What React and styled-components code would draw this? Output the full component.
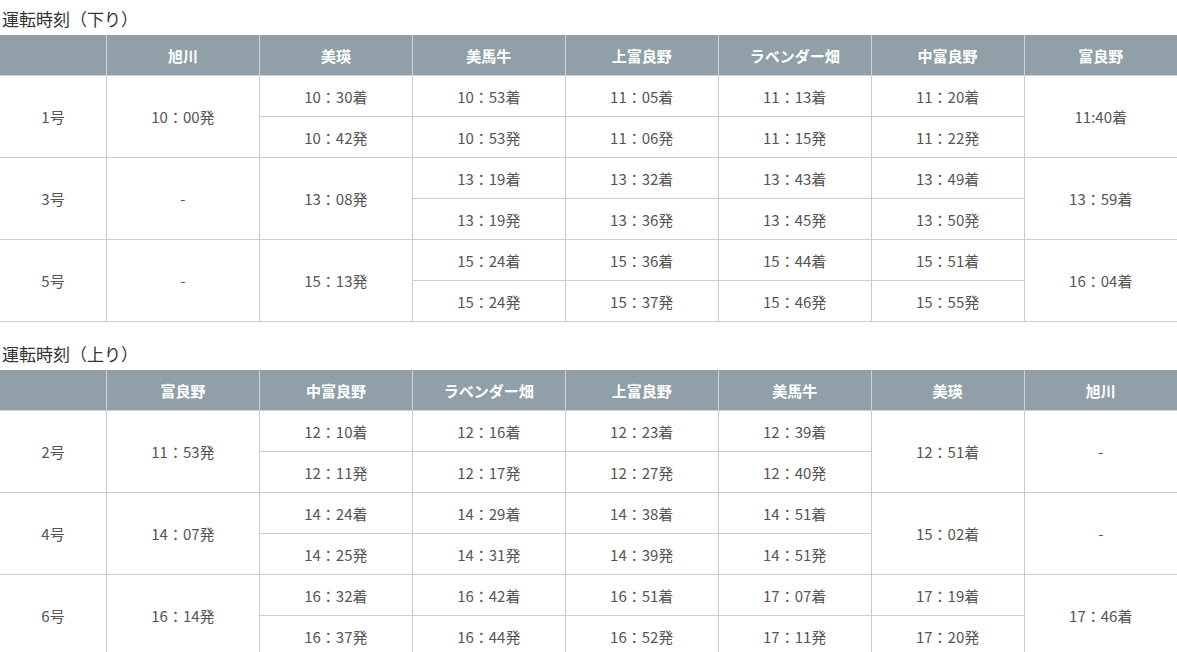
import styled, { createGlobalStyle } from "styled-components";

const GlobalStyle = createGlobalStyle`
  body {
    margin: 0;
    background: #fff;
    font-family: "Noto Sans CJK JP", "Noto Sans", sans-serif;
  }
`

const Page = styled.div`
  display: flex;
  flex-direction: column;
`

const Section = styled.section`
  display: flex;
  flex-direction: column;
  & + & {
    margin-top: 13px;
  }
`

const Title = styled.h2`
  margin: 0;
  padding: 0 2px;
  height: 35px;
  line-height: 37px;
  font-size: 17px;
  font-weight: 400;
  color: #333;
`

const Table = styled.table`
  width: 100%;
  border-collapse: collapse;
  table-layout: fixed;
  color: #555;
  font-size: 15px;
`

const HeadCell = styled.th`
  width: ${p => (p.$first ? "106px" : "auto")};
  height: 40px;
  padding: 0;
  background: #919fa8;
  color: #fff;
  font-weight: 700;
  text-align: center;
  border-left: 1px solid #cdd3d7;
  border-bottom: 1px solid #cdd3d7;
  &:first-child {
    border-left: none;
  }
`

const Cell = styled.td`
  height: 40px;
  padding: 0;
  text-align: center;
  vertical-align: middle;
  border: 1px solid #ccc;
  &:first-child {
    border-left: none;
  }
  &:last-child {
    border-right: none;
  }
`

const down = {
  title: "運転時刻（下り）",
  stations: ["旭川", "美瑛", "美馬牛", "上富良野", "ラベンダー畑", "中富良野", "富良野"],
  trains: [
    ["1号", "10：00発", ["10：30着", "10：42発"], ["10：53着", "10：53発"], ["11：05着", "11：06発"], ["11：13着", "11：15発"], ["11：20着", "11：22発"], "11:40着"],
    ["3号", "-", "13：08発", ["13：19着", "13：19発"], ["13：32着", "13：36発"], ["13：43着", "13：45発"], ["13：49着", "13：50発"], "13：59着"],
    ["5号", "-", "15：13発", ["15：24着", "15：24発"], ["15：36着", "15：37発"], ["15：44着", "15：46発"], ["15：51着", "15：55発"], "16：04着"],
  ],
}

const up = {
  title: "運転時刻（上り）",
  stations: ["富良野", "中富良野", "ラベンダー畑", "上富良野", "美馬牛", "美瑛", "旭川"],
  trains: [
    ["2号", "11：53発", ["12：10着", "12：11発"], ["12：16着", "12：17発"], ["12：23着", "12：27発"], ["12：39着", "12：40発"], "12：51着", "-"],
    ["4号", "14：07発", ["14：24着", "14：25発"], ["14：29着", "14：31発"], ["14：38着", "14：39発"], ["14：51着", "14：51発"], "15：02着", "-"],
    ["6号", "16：14発", ["16：32着", "16：37発"], ["16：42着", "16：44発"], ["16：51着", "16：52発"], ["17：07着", "17：11発"], ["17：19着", "17：20発"], "17：46着"],
  ],
}

const TrainRows = ({ cells }) => (
  <>
    <tr>
      {cells.map((c, i) =>
        Array.isArray(c) ? (
          <Cell key={i}>{c[0]}</Cell>
        ) : (
          <Cell key={i} rowSpan={2}>{c}</Cell>
        )
      )}
    </tr>
    <tr>
      {cells.map((c, i) => (Array.isArray(c) ? <Cell key={i}>{c[1]}</Cell> : null))}
    </tr>
  </>
)

const Timetable = ({ data }) => (
  <Section>
    <Title>{data.title}</Title>
    <Table>
      <thead>
        <tr>
          <HeadCell $first />
          {data.stations.map(s => (
            <HeadCell key={s}>{s}</HeadCell>
          ))}
        </tr>
      </thead>
      <tbody>
        {data.trains.map(t => (
          <TrainRows key={t[0]} cells={t} />
        ))}
      </tbody>
    </Table>
  </Section>
)

export default function App() {
  return (
    <Page>
      <GlobalStyle />
      <Timetable data={down} />
      <Timetable data={up} />
    </Page>
  );
}
